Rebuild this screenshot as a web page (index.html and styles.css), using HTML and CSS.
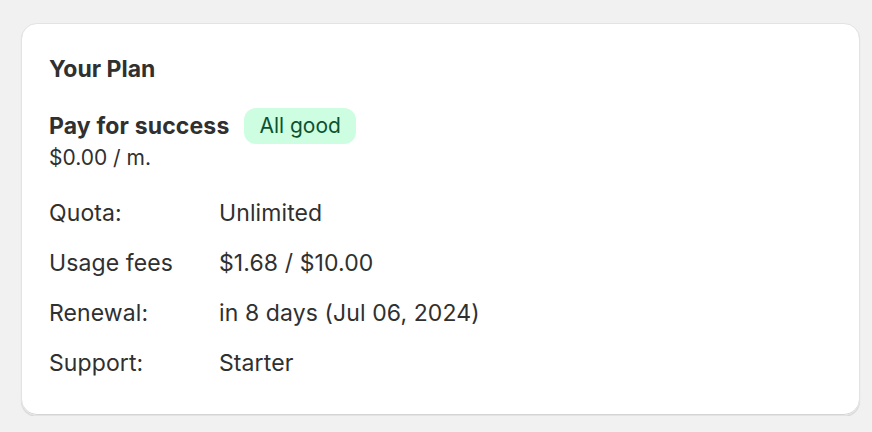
FILE: index.html
```html
<!DOCTYPE html>
<html>
<head>
<meta charset="utf-8">
<link rel="stylesheet" href="styles.css">
</head>
<body>
<div class="page">
  <section class="card">
    <h2 class="title">Your Plan</h2>
    <div class="plan">
      <div class="plan-head">
        <span class="plan-name">Pay for success</span>
        <span class="badge">All good</span>
      </div>
      <div class="price">$0.00 / m.</div>
    </div>
    <div class="rows">
      <div class="row"><span class="label">Quota:</span><span class="value">Unlimited</span></div>
      <div class="row"><span class="label">Usage fees</span><span class="value">$1.68 / $10.00</span></div>
      <div class="row"><span class="label">Renewal:</span><span class="value">in 8 days (Jul 06, 2024)</span></div>
      <div class="row"><span class="label">Support:</span><span class="value">Starter</span></div>
    </div>
  </section>
</div>
</body>
</html>
```
FILE: styles.css
```css
html, body {
  margin: 0;
  padding: 0;
  background: #f1f1f1;
}
body {
  font-family: Inter, "Noto Sans", sans-serif;
  color: #303030;
}
.page {
  padding: 23px 12px 0 21px;
}
.card {
  box-sizing: border-box;
  height: 393px;
  background: #ffffff;
  border-radius: 16px;
  border: 1px solid #e3e3e3;
  box-shadow: 0 1px 1px rgba(0, 0, 0, 0.12), inset 0 -1px 0 #d4d4d4;
  padding: 31px 28px 0 27px;
}
.title {
  margin: 0;
  font-size: 23px;
  font-weight: 700;
  line-height: 28px;
}
.plan {
  margin-top: 25px;
}
.plan-head {
  display: flex;
  align-items: center;
  gap: 15px;
}
.plan-name {
  font-size: 23px;
  font-weight: 700;
  letter-spacing: 0.15px;
}
.badge {
  background: #cdfee1;
  color: #0c5132;
  font-size: 21px;
  padding: 4px 15px;
  border-radius: 12px;
  line-height: 28px;
}
.price {
  font-size: 21px;
  line-height: 27px;
}
.rows {
  margin-top: 28px;
  display: flex;
  flex-direction: column;
  gap: 22px;
}
.row {
  display: flex;
  font-size: 23px;
  line-height: 28px;
  letter-spacing: 0.1px;
}
.label {
  width: 170px;
}
```
